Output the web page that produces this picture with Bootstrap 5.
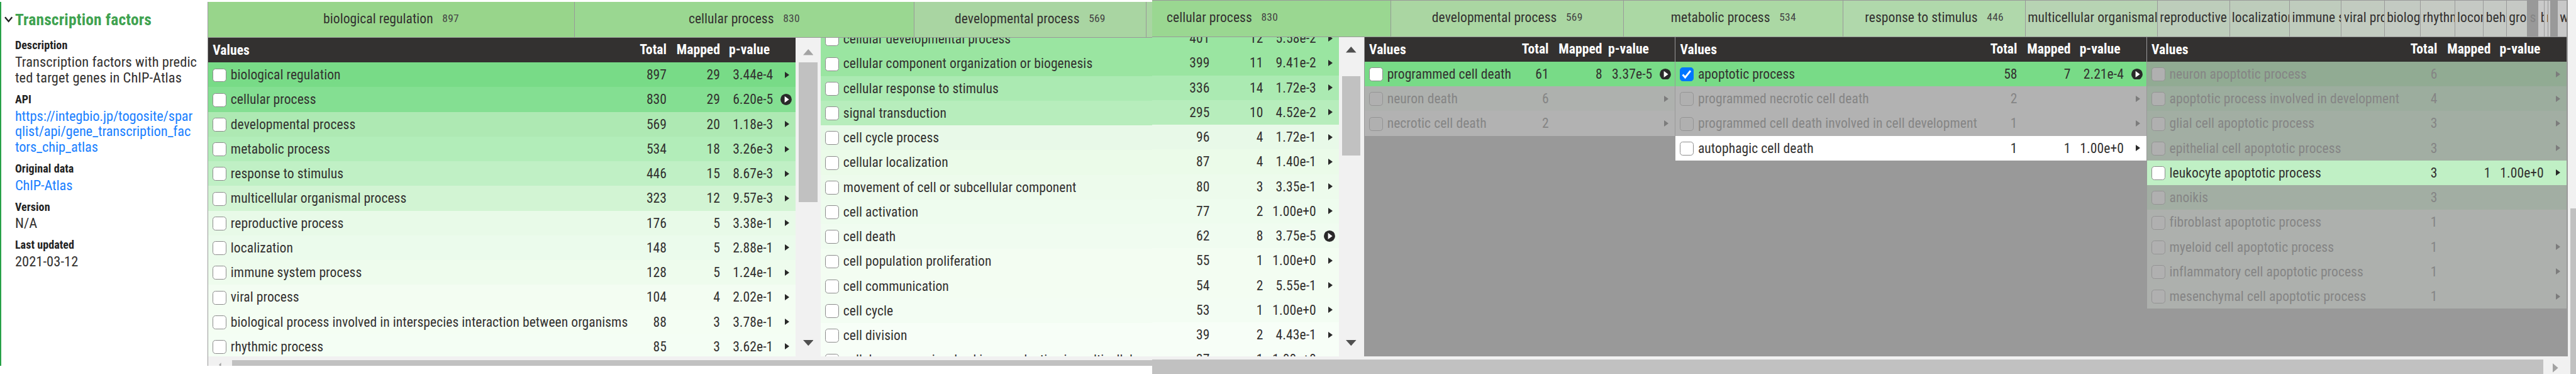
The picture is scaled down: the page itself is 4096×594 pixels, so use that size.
<!DOCTYPE html>
<html lang="en">
<head>
<meta charset="utf-8">
<title>Transcription factors</title>
<link rel="stylesheet" href="https://cdn.jsdelivr.net/npm/bootstrap@5.3.0/dist/css/bootstrap.min.css">
<style>
/* 1rem stands for 100 layout units */
html { font-size: 66.396px; }
body { font-family: "Roboto Condensed", Roboto, "Liberation Sans", sans-serif; font-size: .325rem; line-height: .591rem; letter-spacing: .003em; color: #333130; white-space: nowrap; overflow: hidden; background: #fff; }
.page { height: 8.94rem; }
.shot-left { width: 27.59rem; padding-top: .05rem; height: 8.75rem; }
.shot-right { height: 8.94rem; }
/* sidebar */
.side { width: 4.97rem; height: 8.7rem; border-left: .04rem solid #28a148; padding-left: .33rem; }
.side h1 { font-size: .384rem; font-weight: 700; line-height: .5rem; color: #3fa250; margin: .17rem 0 .19rem; letter-spacing: .006em; }
.side svg { position: absolute; left: -.25rem; top: .17rem; width: .2rem; height: .15rem; }
.side dl { margin: 0; }
.side dt { font-size: .272rem; line-height: .36rem; font-weight: 700; color: #222; }
.side dd { font-size: .338rem; line-height: .373rem; margin: 0 0 .15rem; padding-top: .03rem; letter-spacing: .003em; }
.side dd a { color: #1a80ff; text-decoration: none; letter-spacing: -.006em; }
/* tabs */
.tabs { height: .86rem; border-bottom: .03rem solid #999; line-height: .81rem; background: #999; }
.shot-right .tabs { height: .89rem; border-top: .03rem solid #999; }
.tab-i { border-right: .025rem solid #999; overflow: hidden; display: flex; justify-content: center; gap: .22rem; flex: none; }
.tab-i.cut { justify-content: flex-start; padding-left: .05rem; }
.tab-i i { font-style: normal; font-size: .262rem; letter-spacing: .015em; color: #444; }
/* columns */
.body-l { height: 7.62rem; }
.body-r { height: 7.63rem; background: #999; }
.colm { overflow: hidden; flex: none; }
.edge-r { border-right: .03rem solid #999; }
.edge-l { border-left: .03rem solid #999; }
.hd { height: .585rem; line-height: .57rem; background: #333130; color: #fff; font-weight: 700; display: flex; }
.rw { height: .591rem; display: flex; background: var(--c); }
.nm { flex: 1 1 0; min-width: 0; padding-left: .11rem; display: flex; align-items: center; }
.rw .nm { gap: .105rem; }
.n1, .n2, .n3 { text-align: right; flex: none; }
.n1 { width: .7rem; } .n2 { width: 1.28rem; } .n3 { width: 1.27rem; }
.hd .n3 { padding-right: .08rem; }
.n4 { width: .54rem; flex: none; display: flex; align-items: center; justify-content: center; padding-left: .13rem; }
.tight .n3 { width: 1.2rem; }
.box { width: .325rem; height: .33rem; flex: none; background: #fff; border: .028rem solid #8c8c8c; border-radius: .07rem; margin-top: .02rem; }
.box.on { background: #0075ff; border-color: #0075ff; display: flex; }
.off { color: #858585; }
.off .box { background: #b0b0b0; border-color: #949494; }
.tri { width: 0; height: 0; border: .08rem solid transparent; border-left: .11rem solid #292929; border-right: 0; }
.off .tri { border-left-color: #7c7c7c; }
.dot { width: .27rem; height: .27rem; }
/* scroll bars */
.vbar { background: #f1f1f1; display: flex; flex-direction: column; align-items: center; justify-content: space-between; flex: none; }
.vbar svg { width: .25rem; height: .15rem; flex: none; }
.vbar div { background: #c1c1c1; width: .445rem; }
.hbar { background: #f1f1f1; padding-top: .08rem; display: flex; overflow: hidden; }
.hbar div { background: #c1c1c1; height: 100%; }
.gutter { width: .2rem; height: 8.94rem; background: #f1f1f1; padding: 4.98rem 0 0 .06rem; }
.gutter div { background: #c1c1c1; height: 3.96rem; }
</style>
</head>
<body>
<main class="page d-flex align-items-start">
  <section class="shot-left d-flex flex-shrink-0">
    <aside class="side flex-shrink-0 pe-0">
      <h1 class="position-relative"><svg viewBox="0 0 20 15"><path d="M1.5 2 10 12 18.5 2" fill="none" stroke="#222" stroke-width="3.6"/></svg>Transcription factors</h1>
      <dl>
        <dt>Description</dt><dd>Transcription factors with predic<br>ted target genes in ChIP-Atlas</dd>
        <dt>API</dt><dd><a href="#">https://integbio.jp/togosite/spar<br>qlist/api/gene_transcription_fac<br>tors_chip_atlas</a></dd>
        <dt>Original data</dt><dd><a href="#">ChIP-Atlas</a></dd>
        <dt>Version</dt><dd>N/A</dd>
        <dt>Last updated</dt><dd>2021-03-12</dd>
      </dl>
    </aside>
    <div class="flex-grow-1 overflow-hidden" style="border-left:.03rem solid #999">
      <div class="tabs d-flex" id="tabsL"></div>
      <div class="body-l d-flex">
        <div class="colm" id="c1" style="width:14.07rem"></div>
        <div class="vbar" style="width:.6rem;padding:.26rem 0 .24rem">
          <svg viewBox="0 0 25 15"><path d="M0 14.5 12.5 0 25 14.5z" fill="#a3a3a3"/></svg>
          <div style="height:3.34rem;margin:.17rem 0 auto"></div>
          <svg viewBox="0 0 25 15"><path d="M0 0 12.5 14 25 0z" fill="#505050"/></svg>
        </div>
        <div class="colm flex-grow-1" id="c2a" style="width:7.9rem"></div>
      </div>
      <div class="hbar" style="height:.22rem"><svg style="width:.57rem;height:.2rem;flex:none" viewBox="0 0 57 20"><path d="M26 11 31 6V20z" fill="#a3a3a3"/></svg><div class="flex-grow-1"></div></div>
    </div>
  </section>
  <section class="shot-right flex-grow-1 overflow-hidden">
    <div class="tabs d-flex" id="tabsR"></div>
    <div class="body-r d-flex">
      <div class="colm" id="c2b" style="width:4.47rem"></div>
      <div class="vbar edge-r" style="width:.62rem;padding:.23rem 0">
        <svg viewBox="0 0 25 15"><path d="M0 14.5 12.5 0 25 14.5z" fill="#505050"/></svg>
        <div style="height:1.89rem;margin:.56rem 0 auto"></div>
        <svg viewBox="0 0 25 15"><path d="M0 0 12.5 14 25 0z" fill="#505050"/></svg>
      </div>
      <div class="colm tight" id="c3" style="width:7.43rem"></div>
      <div class="colm edge-l" id="c4" style="width:11.29rem"></div>
      <div class="colm edge-l" id="c5" style="width:10.06rem"></div>
    </div>
    <div class="hbar" style="height:.42rem"><div style="width:33.31rem"></div><svg style="width:.13rem;height:.22rem;margin:.09rem 0 0 .24rem" viewBox="0 0 13 22"><path d="M0 0 13 11 0 22z" fill="#a3a3a3"/></svg></div>
  </section>
  <div class="gutter flex-shrink-0"><div></div></div>
</main>
<script src="https://cdn.jsdelivr.net/npm/bootstrap@5.3.0/dist/js/bootstrap.bundle.min.js"></script>
<script>
const $ = id => document.getElementById(id);
const dot = '<svg class="dot" style="margin-left:-.04rem" viewBox="0 0 27 27"><circle cx="13.5" cy="13.5" r="13.5" fill="#292929"/><path d="M10 5.5 20.5 13.5 10 21z" fill="#fff"/></svg>';
const box = '<span class="box"></span>';
const boxOn = '<span class="box on"><svg viewBox="0 0 30 30" width="100%" height="100%"><path d="M5.5 16 11.5 22.5 24.5 6.5" fill="none" stroke="#fff" stroke-width="4.6"/></svg></span>';
const head = '<div class="hd"><span class="nm">Values</span><span class="n1">Total</span><span class="n2">Mapped</span><span class="n3">p-value</span><span class="n4"></span></div>';

// row: name | total | mapped | p-value | colour | flags (o: open, x: unmapped, c: checked, n: no children)
function row(line, part) {
  const [name, t, m, p, c, f = ''] = line.split('|');
  const nm = part === 'numbers' ? '<span class="nm"></span>' : `<span class="nm">${f.includes('c') ? boxOn : box}<span>${name}</span></span>`;
  const nums = part === 'names' ? '' : `<span class="n1">${t}</span><span class="n2">${m}</span><span class="n3">${p}</span><span class="n4">${f.includes('n') ? '' : f.includes('o') ? dot : '<span class="tri"></span>'}</span>`;
  return `<div class="rw${f.includes('x') ? ' off' : ''}" style="--c:#${c}">${nm}${nums}</div>`;
}
const rows = (list, part) => list.map(l => row(l, part)).join('');

$('c1').innerHTML = head + rows([
  'biological regulation|897|29|3.44e-4|78db87', 'cellular process|830|29|6.20e-5|84df92|o',
  'developmental process|569|20|1.18e-3|aee9b3', 'metabolic process|534|18|3.26e-3|b2edb9',
  'response to stimulus|446|15|8.67e-3|c0f0c5', 'multicellular organismal process|323|12|9.57e-3|d2f4d3',
  'reproductive process|176|5|3.38e-1|e8fae8', 'localization|148|5|2.88e-1|ebfbec',
  'immune system process|128|5|1.24e-1|eefced', 'viral process|104|4|2.02e-1|f3fdf2',
  'biological process involved in interspecies interaction between organisms|88|3|3.78e-1|f4fef3', 'rhythmic process|85|3|3.62e-1|f4fef4']);

const c2 = [
  'cellular developmental process|401|12|5.58e-2|9ae5a1', 'cellular component organization or biogenesis|399|11|9.41e-2|9ae5a1',
  'cellular response to stimulus|336|14|1.72e-3|abeab2', 'signal transduction|295|10|4.52e-2|b7edbc',
  'cell cycle process|96|4|1.72e-1|e8f9e8', 'cellular localization|87|4|1.40e-1|ebfbe9',
  'movement of cell or subcellular component|80|3|3.35e-1|edfbec', 'cell activation|77|2|1.00e+0|eefcee',
  'cell death|62|8|3.75e-5|f0fcf0|o', 'cell population proliferation|55|1|1.00e+0|f3fdf2',
  'cell communication|54|2|5.55e-1|f3fdf2', 'cell cycle|53|1|1.00e+0|f3fdf3',
  'cell division|39|2|4.43e-1|f7fef7', 'cellular process involved in reproduction in multicellular organism|37|1|1.00e+0|f7fef7'];
$('c2a').innerHTML = `<div style="margin-top:-.275rem">${rows(c2, 'names')}</div>`;
$('c2b').innerHTML = `<div style="margin-top:-.27rem">${rows(c2, 'numbers')}</div>`;

$('c3').innerHTML = head + rows([
  'programmed cell death|61|8|3.37e-5|78db87|o', 'neuron death|6|||aeb1ae|x', 'necrotic cell death|2|||b2b2b2|x']);
$('c4').innerHTML = head + rows([
  'apoptotic process|58|7|2.21e-4|78db87|oc', 'programmed necrotic cell death|2|||b2b2b2|x',
  'programmed cell death involved in cell development|1|||b2b2b2|x', 'autophagic cell death|1|1|1.00e+0|fff']);
$('c5').innerHTML = head + rows([
  'neuron apoptotic process|6|||91ab93|x', 'apoptotic process involved in development|4|||9cad9e|x',
  'glial cell apoptotic process|3|||a2aea3|x', 'epithelial cell apoptotic process|3|||a2aea3|x',
  'leukocyte apoptotic process|3|1|1.00e+0|c0f0c5', 'anoikis|3|||a2aea3|xn',
  'fibroblast apoptotic process|1|||adb0ad|xn', 'myeloid cell apoptotic process|1|||adb0ad|x',
  'inflammatory cell apoptotic process|1|||adb0ad|x', 'mesenchymal cell apoptotic process|1|||adb0ad|x']);

// tab: name, count, width, colour
const tab = ([n, k, w, c]) => `<div class="tab-i${k ? '' : ' cut'}" style="width:${w}rem;background:#${c}"><span>${n}</span>${k ? `<i>${k}</i>` : ''}</div>`;
$('tabsL').innerHTML = [['biological regulation', 897, 8.78, '98d58b'], ['cellular process', 830, 8.13, '9ad791'],
  ['developmental process', 569, 5.56, 'a9d5a2'], ['', '', .2, 'a9d5a2']].map(tab).join('');
$('tabsR').innerHTML = [['cellular process', 830, 5.73, '9ad791'], ['developmental process', 569, 5.57, 'aad6a2'],
  ['metabolic process', 534, 5.26, 'abd8a4'], ['response to stimulus', 446, 4.36, 'b0d8ab'],
  ['multicellular organismal', '', 3.165, 'b7d3b3'], ['reproductive', '', 1.725, 'bdcdbb'],
  ['localization', '', 1.44, 'bdccbb'], ['immune s', '', 1.24, 'bfccbd'], ['viral pro', '', 1.03, 'c2cbc0'],
  ['biolog', '', .86, 'c3cac2'], ['rhythm', '', .825, 'c5cac3'], ['locom', '', .69, 'c5c9c4'],
  ['beh', '', .55, 'c5c9c4'], ['gro', '', .5, 'c6c9c5'], ['<span style="color:#858585">s</span>', '', .26, '999'],
  ['b', '', .14, 'cacaca'], ['r', '', .095, 'cacaca'], ['', '', .06, 'cacaca'], ['', '', .16, '999'], ['w', '', .23, 'c8c8c8']].map(tab).join('');
const first = $('tabsR').firstChild;
first.style.justifyContent = 'flex-start';
first.style.paddingLeft = '.35rem';
</script>
</body>
</html>
